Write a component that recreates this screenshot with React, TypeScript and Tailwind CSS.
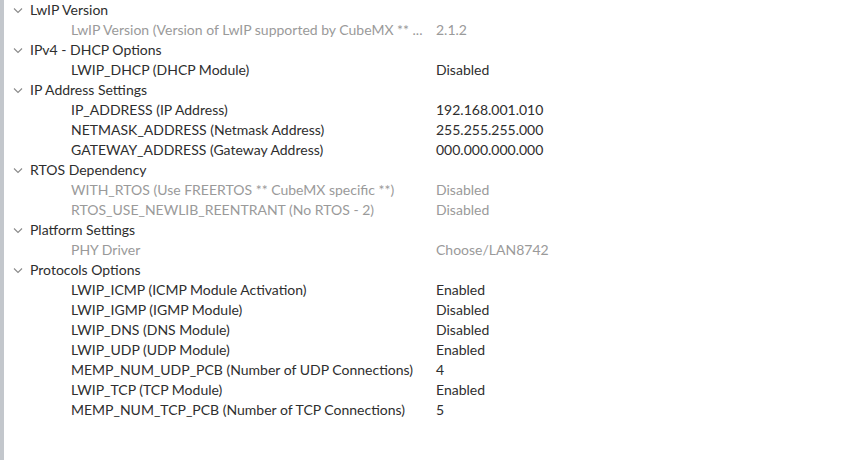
type Param = { name: string; value: string; muted?: boolean };
type Group = { title: string; params: Param[] };

const groups: Group[] = [
  {
    title: 'LwIP Version',
    params: [
      { name: 'LwIP Version (Version of LwIP supported by CubeMX ** ...', value: '2.1.2', muted: true },
    ],
  },
  {
    title: 'IPv4 - DHCP Options',
    params: [{ name: 'LWIP_DHCP (DHCP Module)', value: 'Disabled' }],
  },
  {
    title: 'IP Address Settings',
    params: [
      { name: 'IP_ADDRESS (IP Address)', value: '192.168.001.010' },
      { name: 'NETMASK_ADDRESS (Netmask Address)', value: '255.255.255.000' },
      { name: 'GATEWAY_ADDRESS (Gateway Address)', value: '000.000.000.000' },
    ],
  },
  {
    title: 'RTOS Dependency',
    params: [
      { name: 'WITH_RTOS (Use FREERTOS ** CubeMX specific **)', value: 'Disabled', muted: true },
      { name: 'RTOS_USE_NEWLIB_REENTRANT (No RTOS - 2)', value: 'Disabled', muted: true },
    ],
  },
  {
    title: 'Platform Settings',
    params: [{ name: 'PHY Driver', value: 'Choose/LAN8742', muted: true }],
  },
  {
    title: 'Protocols Options',
    params: [
      { name: 'LWIP_ICMP (ICMP Module Activation)', value: 'Enabled' },
      { name: 'LWIP_IGMP (IGMP Module)', value: 'Disabled' },
      { name: 'LWIP_DNS (DNS Module)', value: 'Disabled' },
      { name: 'LWIP_UDP (UDP Module)', value: 'Enabled' },
      { name: 'MEMP_NUM_UDP_PCB (Number of UDP Connections)', value: '4' },
      { name: 'LWIP_TCP (TCP Module)', value: 'Enabled' },
      { name: 'MEMP_NUM_TCP_PCB (Number of TCP Connections)', value: '5' },
    ],
  },
];

function Chevron() {
  return (
    <svg width="10" height="7" viewBox="0 0 10 7" className="shrink-0">
      <path d="M1 1.5 L5 5.5 L9 1.5" fill="none" stroke="#8a8a8a" strokeWidth="1.1" />
    </svg>
  );
}

export default function App() {
  return (
    <div
      className="flex h-[460px] w-[858px] bg-white text-[14px] text-[#2e2e2e]"
      style={{ fontFamily: 'Lato, "Open Sans", sans-serif' }}
    >
      <div className="w-[4px] shrink-0 bg-[#c3c7cc]" />
      <div className="flex flex-1 flex-col">
        {groups.map((g) => (
          <div key={g.title} className="flex flex-col">
            <div className="flex h-[20px] items-center gap-[7px] pl-[9px]">
              <Chevron />
              <span className="leading-[20px]">{g.title}</span>
            </div>
            {g.params.map((p) => (
              <div
                key={p.name}
                className={`flex h-[20px] items-center ${p.muted ? 'text-[#9a9a9a]' : ''}`}
              >
                <span className="w-[432px] shrink-0 truncate pl-[67px] leading-[20px]">{p.name}</span>
                <span className="leading-[20px]">{p.value}</span>
              </div>
            ))}
          </div>
        ))}
      </div>
    </div>
  );
}
